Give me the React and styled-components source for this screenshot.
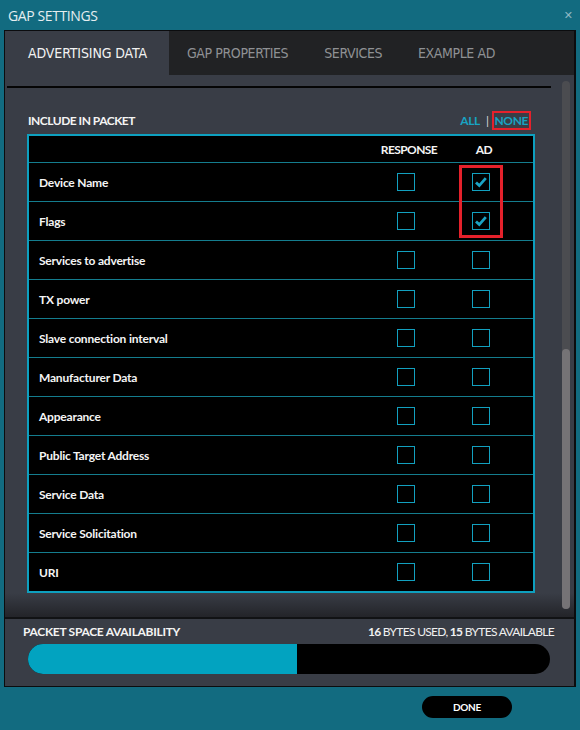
import React from 'react'
import styled, { createGlobalStyle } from 'styled-components'

const GlobalStyle = createGlobalStyle`
  html, body { margin: 0; padding: 0; }
  body {
    width: 580px;
    height: 730px;
    background: #126b80;
    overflow: hidden;
  }
`

const COND = `Lato, "DejaVu Sans Condensed", sans-serif`
const TABFONT = `"DejaVu Sans Condensed", "DejaVu Sans", sans-serif`

const tabs = ['ADVERTISING DATA', 'GAP PROPERTIES', 'SERVICES', 'EXAMPLE AD']

const rows = [
  { name: 'Device Name', response: false, ad: true },
  { name: 'Flags', response: false, ad: true },
  { name: 'Services to advertise', response: false, ad: false },
  { name: 'TX power', response: false, ad: false },
  { name: 'Slave connection interval', response: false, ad: false },
  { name: 'Manufacturer Data', response: false, ad: false },
  { name: 'Appearance', response: false, ad: false },
  { name: 'Public Target Address', response: false, ad: false },
  { name: 'Service Data', response: false, ad: false },
  { name: 'Service Solicitation', response: false, ad: false },
  { name: 'URI', response: false, ad: false },
]

function CheckBox({ checked }) {
  return (
    <Box>
      {checked && (
        <svg width="18" height="18" viewBox="0 0 18 18">
          <path d="M4 9.5 L7.3 12.6 L13.8 5.2" fill="none" stroke="#1ba3c4" strokeWidth="2.8" strokeLinejoin="miter" />
        </svg>
      )}
    </Box>
  )
}

export default function App() {
  const used = 16
  const avail = 15
  return (
    <Page>
      <GlobalStyle />
      <TitleBar>
        <Title>GAP SETTINGS</Title>
        <Close>✕</Close>
      </TitleBar>
      <Panel>
        <TabBar>
          {tabs.map((t, i) => (
            <Tab key={t} active={i === 0}>{t}</Tab>
          ))}
        </TabBar>
        <ScrollArea>
          <Content>
            <Rule />
            <SectionHead>
              <SectionTitle>INCLUDE IN PACKET</SectionTitle>
              <Toggle>
                <ToggleLink>ALL</ToggleLink>
                <Sep>|</Sep>
                <ToggleLink highlight>NONE</ToggleLink>
              </Toggle>
            </SectionHead>
            <Table>
              <HeadRow>
                <span />
                <HeadCell>RESPONSE</HeadCell>
                <HeadCell>AD</HeadCell>
              </HeadRow>
              {rows.map((r) => (
                <Row key={r.name}>
                  <Label>{r.name}</Label>
                  <Cell><CheckBox checked={r.response} /></Cell>
                  <Cell><CheckBox checked={r.ad} /></Cell>
                </Row>
              ))}
              <Marker />
            </Table>
          </Content>
          <Track>
            <Thumb />
          </Track>
        </ScrollArea>
        <Footer>
          <FooterHead>
            <SectionTitle tight>PACKET SPACE AVAILABILITY</SectionTitle>
            <Usage>
              <b>{used}</b> BYTES USED, <b>{avail}</b> BYTES AVAILABLE
            </Usage>
          </FooterHead>
          <Bar>
            <Fill style={{ width: `${(used / (used + avail)) * 100}%` }} />
          </Bar>
        </Footer>
      </Panel>
      <Actions>
        <DoneButton>DONE</DoneButton>
      </Actions>
    </Page>
  )
}

const Page = styled.div`
  width: 580px;
  height: 730px;
  display: flex;
  flex-direction: column;
  padding: 0 4px;
  box-sizing: border-box;
`

const TitleBar = styled.div`
  height: 30px;
  display: flex;
  align-items: center;
  justify-content: space-between;
  padding: 0 4px 0 4px;
`

const Title = styled.div`
  font-family: "Open Sans", sans-serif;
  font-size: 14px;
  color: #e6eef0;
  letter-spacing: -0.4px;
`

const Close = styled.div`
  font-family: "DejaVu Sans", sans-serif;
  font-size: 11px;
  color: #8fb8c4;
  margin-right: -1px;
`

const Panel = styled.div`
  height: 655px;
  border: 1px solid #0b0c0e;
  border-right-width: 2px;
  background: #393d46;
  display: flex;
  flex-direction: column;
`

const TabBar = styled.div`
  display: flex;
  height: 44px;
  background: #212224;
`

const Tab = styled.div`
  height: 100%;
  display: flex;
  align-items: center;
  white-space: nowrap;
  padding: 0 18px;
  font-family: ${TABFONT};
  font-size: 14px;
  letter-spacing: ${(p) => (p.active ? '-0.12px' : '-0.4px')};
  color: ${(p) => (p.active ? '#f2f2f2' : '#8f9194')};
  background: ${(p) => (p.active ? '#393d46' : 'transparent')};
  &:first-child { padding: 0 22px 0 23px; }
`

const ScrollArea = styled.div`
  height: 542px;
  display: flex;
  background: linear-gradient(to bottom, #393d46 0, #393d46 518px, #24252a 541px);
  border-bottom: 2px solid #111214;
`

const Content = styled.div`
  flex: 1;
  padding: 11px 0 0 2px;
`

const Rule = styled.div`
  height: 2px;
  background: #050505;
  margin-right: 2px;
`

const SectionHead = styled.div`
  display: flex;
  align-items: center;
  justify-content: space-between;
  margin: 23px 0 4px 0;
  padding: 0 22px 0 21px;
`

const SectionTitle = styled.div`
  font-family: ${COND};
  font-weight: bold;
  font-size: 12px;
  letter-spacing: ${(p) => (p.tight ? '-0.3px' : '-0.5px')};
  color: #f4f4f4;
`

const Toggle = styled.div`
  display: flex;
  align-items: center;
  gap: 3px;
  font-family: ${COND};
  font-weight: bold;
  font-size: 12px;
  letter-spacing: -0.4px;
`

const ToggleLink = styled.span`
  color: #18a3c2;
  padding: 0 1px;
  border: 2px solid ${(p) => (p.highlight ? '#e5212b' : 'transparent')};
`

const Sep = styled.span`
  color: #d8d8d8;
  font-weight: normal;
`

const Table = styled.div`
  position: relative;
  margin-left: 20px;
  width: 504px;
  border: 2px solid #0ea0bf;
  background: #000;
`

const grid = `
  display: grid;
  grid-template-columns: 1fr 90px 60px;
  padding: 0 22px 0 10px;
  align-items: center;
`

const HeadRow = styled.div`
  ${grid}
  height: 26px;
`

const HeadCell = styled.div`
  text-align: center;
  font-family: ${COND};
  font-weight: bold;
  font-size: 12px;
  letter-spacing: -0.6px;
  color: #f4f4f4;
  padding-left: 6px;
`

const Row = styled.div`
  ${grid}
  height: 38px;
  border-top: 1px solid #147d8e;
`

const Label = styled.div`
  font-family: ${COND};
  font-weight: bold;
  font-size: 12px;
  letter-spacing: -0.2px;
  color: #f4f4f4;
`

const Cell = styled.div`
  display: flex;
  justify-content: center;
`

const Box = styled.div`
  width: 16px;
  height: 16px;
  border: 1px solid #12a0bf;
  display: flex;
  align-items: center;
  justify-content: center;
  & svg { flex: none; }
`

const Marker = styled.div`
  position: absolute;
  left: 430px;
  top: 29px;
  width: 38px;
  height: 67px;
  border: 3px solid #e5212b;
  pointer-events: none;
`

const Track = styled.div`
  width: 8px;
  margin: 6px 4px 8px 9px;
  border-radius: 4px;
  background: #4b4c50;
  display: flex;
  flex-direction: column;
  justify-content: flex-end;
`

const Thumb = styled.div`
  height: 260px;
  border-radius: 4px;
  background: #757376;
`

const Footer = styled.div`
  flex: 1;
  padding: 5px 20px 0 18px;
`

const FooterHead = styled.div`
  display: flex;
  justify-content: space-between;
  align-items: center;
`

const Usage = styled.div`
  font-family: ${COND};
  font-size: 12px;
  letter-spacing: -0.7px;
  color: #f0f0f0;
  & b { font-weight: bold; }
`

const Bar = styled.div`
  margin: 5px 4px 0 5px;
  height: 30px;
  border-radius: 15px;
  background: #000;
  overflow: hidden;
`

const Fill = styled.div`
  height: 100%;
  background: #02a3c0;
`

const Actions = styled.div`
  display: flex;
  justify-content: flex-end;
  padding: 9px 64px 0 0;
`

const DoneButton = styled.div`
  width: 90px;
  height: 22px;
  border-radius: 11px;
  background: #000;
  color: #fff;
  display: flex;
  align-items: center;
  justify-content: center;
  font-family: ${COND};
  font-weight: bold;
  font-size: 10px;
  letter-spacing: -0.3px;
`
